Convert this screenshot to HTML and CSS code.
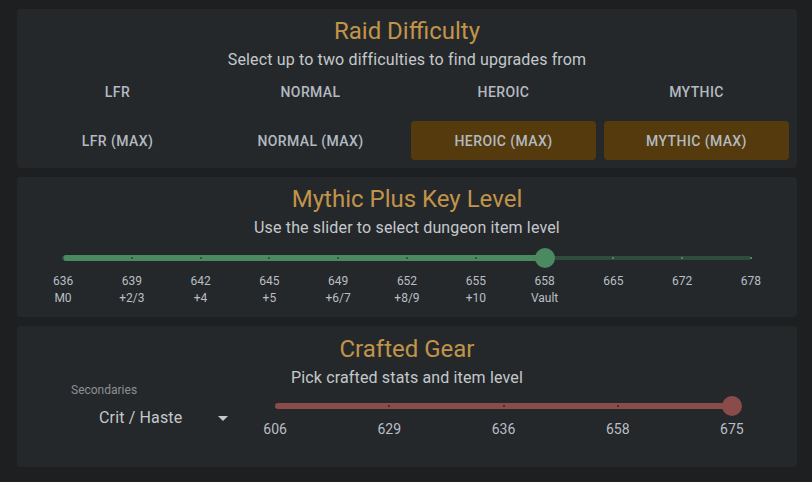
FILE: index.html
```html
<!DOCTYPE html>
<html lang="en">
<head>
    <meta charset="UTF-8">
    <title>Upgrade Finder Settings</title>
    <link rel="stylesheet" href="styles.css">
</head>
<body>

<div class="page">
    <div class="card">
        <h2 class="title">Raid Difficulty</h2>
        <p class="subtitle">Select up to two difficulties to find upgrades from</p>
        <div class="diff-grid">
            <button class="diff">LFR</button>
            <button class="diff">Normal</button>
            <button class="diff">Heroic</button>
            <button class="diff">Mythic</button>
            <button class="diff">LFR (Max)</button>
            <button class="diff">Normal (Max)</button>
            <button class="diff selected">Heroic (Max)</button>
            <button class="diff selected">Mythic (Max)</button>
        </div>
    </div>

    <div class="card">
        <h2 class="title">Mythic Plus Key Level</h2>
        <p class="subtitle">Use the slider to select dungeon item level</p>
        <div class="mp-slider">
            <div class="rail green">
                <div class="fill" style="width:70%"></div>
                <span class="tick on" style="left:0%"></span>
                <span class="tick on" style="left:10%"></span>
                <span class="tick on" style="left:20%"></span>
                <span class="tick on" style="left:30%"></span>
                <span class="tick on" style="left:40%"></span>
                <span class="tick on" style="left:50%"></span>
                <span class="tick on" style="left:60%"></span>
                <span class="tick off" style="left:80%"></span>
                <span class="tick off" style="left:90%"></span>
                <span class="tick off" style="left:100%"></span>
                <div class="thumb" style="left:70%"></div>
            </div>
            <div class="marks mp-marks">
                <div>636<br>M0</div>
                <div>639<br>+2/3</div>
                <div>642<br>+4</div>
                <div>645<br>+5</div>
                <div>649<br>+6/7</div>
                <div>652<br>+8/9</div>
                <div>655<br>+10</div>
                <div>658<br>Vault</div>
                <div>665</div>
                <div>672</div>
                <div>678</div>
            </div>
        </div>
    </div>

    <div class="card crafted">
        <h2 class="title">Crafted Gear</h2>
        <p class="subtitle">Pick crafted stats and item level</p>
        <div class="crafted-row">
            <div class="select-col">
                <div class="select">
                    <label class="select-label">Secondaries</label>
                    <div class="select-value">
                        <span>Crit / Haste</span>
                        <span class="caret"></span>
                    </div>
                </div>
            </div>
            <div class="craft-slider">
                <div class="rail red">
                    <div class="fill" style="width:100%"></div>
                    <span class="tick on" style="left:25%"></span>
                    <span class="tick on" style="left:50%"></span>
                    <span class="tick on" style="left:75%"></span>
                    <div class="thumb" style="left:100%"></div>
                </div>
                <div class="marks craft-marks">
                    <div>606</div>
                    <div>629</div>
                    <div>636</div>
                    <div>658</div>
                    <div>675</div>
                </div>
            </div>
        </div>
    </div>
</div>

</body>
</html>
```

FILE: styles.css
```css
body {
    margin: 0;
    background-color: #1e1f21;
    font-family: Roboto, "Liberation Sans", sans-serif;
}
.page {
    padding: 9px 15px 0 17px;
}
.card {
    background-color: #25282a;
    border-radius: 4px;
    padding: 8px 8px 8px 8px;
    margin-bottom: 9px;
}
.title {
    margin: 0 0 3px;
    font-size: 24px;
    font-weight: 400;
    line-height: 28px;
    text-align: center;
    color: #c1944a;
}
.subtitle {
    margin: 0;
    font-size: 16px;
    line-height: 24px;
    letter-spacing: 0.15px;
    text-align: center;
    color: #c4c8cc;
}

/* raid difficulty buttons */
.diff-grid {
    display: grid;
    grid-template-columns: repeat(4, 1fr);
    column-gap: 8px;
    row-gap: 10px;
}
.diff {
    height: 39px;
    border: none;
    border-radius: 4px;
    background: none;
    font-family: Roboto, "Liberation Sans", sans-serif;
    font-size: 14px;
    font-weight: 500;
    letter-spacing: 0.4px;
    text-transform: uppercase;
    color: #b3bac1;
    cursor: pointer;
}
.diff.selected {
    background-color: #543a0c;
}

/* sliders */
.mp-slider {
    padding: 16px 38px 2px;
}
.rail {
    position: relative;
    height: 4px;
    border-radius: 2px;
}
.fill {
    position: absolute;
    left: 0;
    top: -1px;
    height: 6px;
    border-radius: 3px;
}
.tick {
    position: absolute;
    top: 1px;
    width: 2px;
    height: 2px;
    margin-left: -1px;
}
.thumb {
    position: absolute;
    top: -8px;
    width: 20px;
    height: 20px;
    margin-left: -10px;
    border-radius: 50%;
}
.green { background-color: #2f4c3d; }
.green .fill, .green .thumb { background-color: #4b8a61; }
.green .tick.on { background-color: #2e5a3d; }
.green .tick.off { background-color: #4b8a61; }
.red { background-color: #5c3434; }
.red .fill, .red .thumb { background-color: #8a4b4b; }
.red .tick.on { background-color: #4a2a2a; }

.marks {
    display: grid;
    text-align: center;
    color: #b8bfc6;
}
.mp-marks {
    grid-template-columns: repeat(11, 1fr);
    margin: 13px -34.4px 0;
    font-size: 12px;
    line-height: 17px;
}

/* crafted gear */
.crafted {
    padding-top: 9px;
    padding-bottom: 28px;
}
.crafted-row {
    display: flex;
    margin-top: -8px;
}
.select-col {
    flex: 0 0 225px;
}
.select {
    margin-left: 32px;
    width: 185px;
}
.select-label {
    display: block;
    padding-left: 14px;
    font-size: 12px;
    line-height: 16px;
    color: #8b9096;
}
.select-value {
    display: flex;
    align-items: center;
    margin-top: 8px;
    padding-left: 42px;
    font-size: 16px;
    line-height: 24px;
    letter-spacing: 0.15px;
    color: #c4c8cc;
}
.caret {
    margin-left: 36px;
    width: 0;
    height: 0;
    border-left: 5px solid transparent;
    border-right: 5px solid transparent;
    border-top: 5px solid #c4c8cc;
}
.craft-slider {
    flex: 1;
    padding-top: 22px;
}
.craft-slider .rail {
    margin: 0 57px 0 25px;
}
.craft-marks {
    grid-template-columns: repeat(5, 1fr);
    margin: 11px 0 0 -32px;
    font-size: 14px;
    line-height: 20px;
}
```
